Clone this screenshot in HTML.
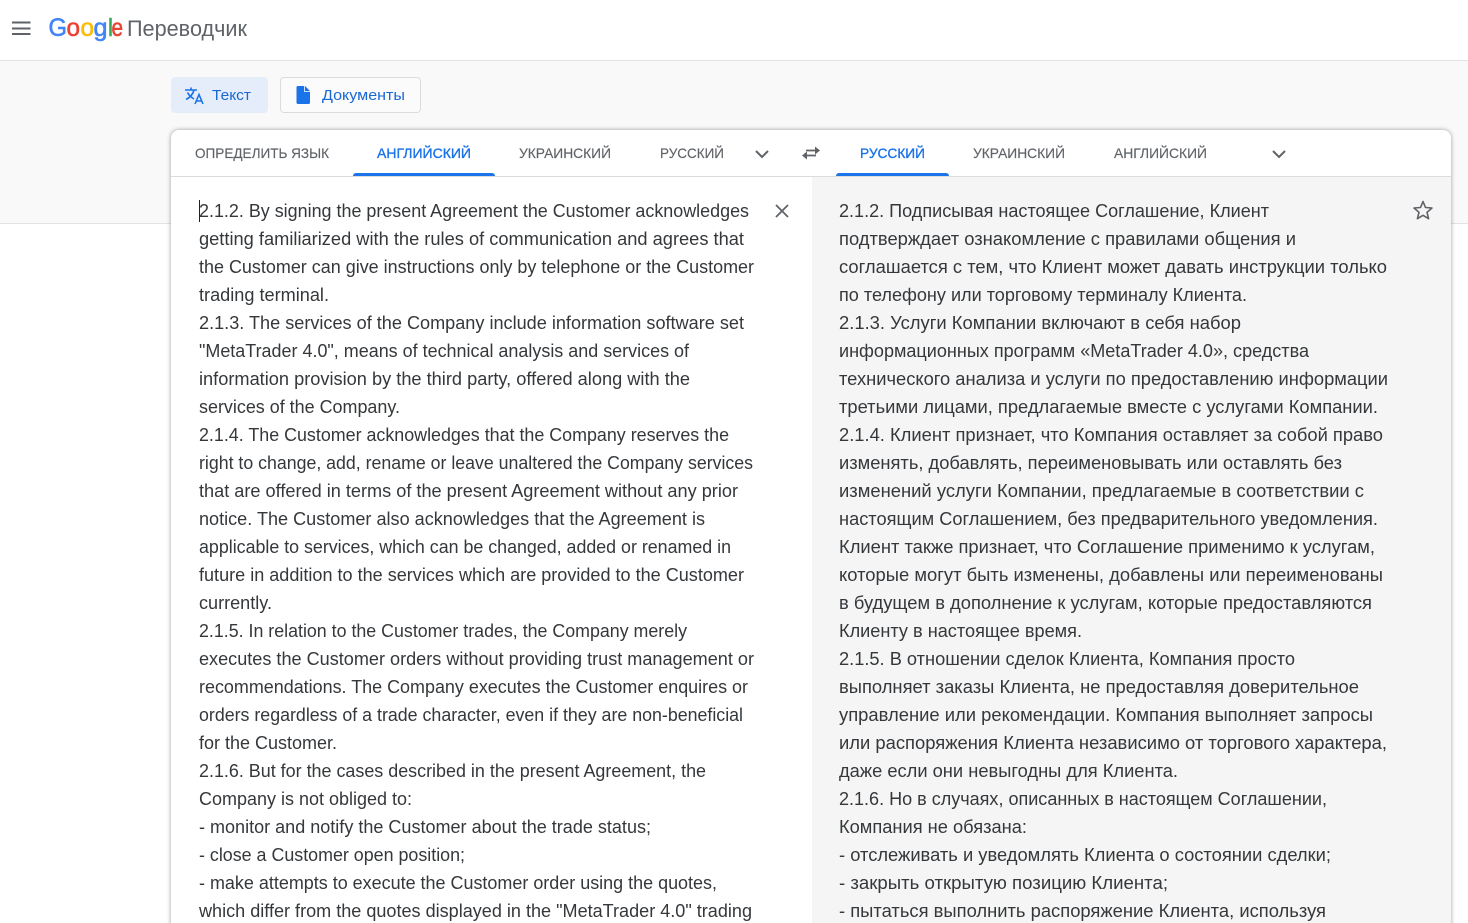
<!DOCTYPE html>
<html lang="ru"><head><meta charset="utf-8"><title>Google Переводчик</title>
<style>
html,body{margin:0;padding:0;width:1468px;height:923px;overflow:hidden;background:#fff}
body{position:relative;font-family:"Liberation Sans",sans-serif}
.a{position:absolute;box-sizing:border-box}
svg{position:absolute;left:0;top:0}
.l text{font-size:18px;fill:#35383b}
.t text{font-size:14px;fill:#5f6368;stroke:#5f6368;stroke-width:.15}
.t text.b{fill:#1a73e8;stroke:#1a73e8;stroke-width:.35}
</style></head><body>
<div class="a" style="left:0;top:0;width:1468px;height:61px;background:#fff;border-bottom:1px solid #e3e3e3"></div>
<div class="a" style="left:0;top:61px;width:1468px;height:163px;background:#f9f9fa;border-bottom:1px solid #e3e3e3"></div>
<div class="a" style="left:171px;top:77px;width:97px;height:36px;background:#e4edf9;border-radius:4px"></div>
<div class="a" style="left:280px;top:77px;width:141px;height:36px;background:#fbfbfb;border:1px solid #dadce0;border-radius:4px"></div>
<div class="a" style="left:171px;top:130px;width:1280px;height:830px;background:#fff;border-radius:8px;box-shadow:0 0 4px rgba(60,64,67,.5)"></div>
<div class="a" style="left:171px;top:176px;width:1280px;height:1px;background:#dadce0"></div>
<div class="a" style="left:812px;top:177px;width:639px;height:746px;background:#f5f5f5"></div>
<div class="a" style="left:353px;top:173px;width:142px;height:3px;background:#1a73e8;border-radius:3px 3px 0 0"></div>
<div class="a" style="left:836px;top:173px;width:113px;height:3px;background:#1a73e8;border-radius:3px 3px 0 0"></div>
<div class="a" style="left:199px;top:200px;width:1px;height:22px;background:#202124"></div>
<svg width="1468" height="923" viewBox="0 0 1468 923" xmlns="http://www.w3.org/2000/svg">
<path d="M12 22.500h18.500M12 28.500h18.500M12 34h18.500" stroke="#5f6368" stroke-width="2" fill="none"/>
<g font-size="25" font-family="Liberation Sans, sans-serif" stroke-width=".6">
<text x="48.500" y="36" fill="#4285f4" stroke="#4285f4" textLength="18.500" lengthAdjust="spacingAndGlyphs">G</text>
<text x="66.500" y="36" fill="#ea4335" stroke="#ea4335" textLength="13.500" lengthAdjust="spacingAndGlyphs">o</text>
<text x="80.500" y="36" fill="#fbbc05" stroke="#fbbc05" textLength="13.500" lengthAdjust="spacingAndGlyphs">o</text>
<text x="93.500" y="36" fill="#4285f4" stroke="#4285f4" textLength="14" lengthAdjust="spacingAndGlyphs">g</text>
<text x="108" y="36" fill="#34a853" stroke="#34a853" textLength="5" lengthAdjust="spacingAndGlyphs">l</text>
<text x="111.500" y="36" fill="#ea4335" stroke="#ea4335" textLength="11.500" lengthAdjust="spacingAndGlyphs">e</text>
</g>
<text x="127" y="36" font-size="22" fill="#5f6368" textLength="120" lengthAdjust="spacingAndGlyphs">Переводчик</text>

<g fill="none" stroke="#1a73e8" stroke-width="1.600">
<path d="M185 90h12M191 87.500v2.500M194 90c-1 4-4 7.500-8 9.500M187.500 92.500c1.500 3 4 5 6.500 6.500"/>
<path d="M195 104l4-9.500 4 9.500M196.500 101h5"/>
</g>
<path d="M298 86h7l5 5v11.500a1.500 1.500 0 0 1-1.500 1.500h-10.500a1.500 1.500 0 0 1-1.500-1.500v-15a1.500 1.500 0 0 1 1.500-1.500z" fill="#1a73e8"/>
<path d="M304.500 86v5.500h5.500" fill="none" stroke="#fff" stroke-width=".8"/>
<text x="212" y="100" font-size="15" fill="#1a67d2" textLength="39" lengthAdjust="spacingAndGlyphs">Текст</text>
<text x="322" y="100" font-size="15" fill="#1a67d2" textLength="83" lengthAdjust="spacingAndGlyphs">Документы</text>

<g class="t">
<text x="195" y="158" textLength="134" lengthAdjust="spacingAndGlyphs">ОПРЕДЕЛИТЬ ЯЗЫК</text>
<text class="b" x="377" y="158" textLength="94" lengthAdjust="spacingAndGlyphs">АНГЛИЙСКИЙ</text>
<text x="519" y="158" textLength="92" lengthAdjust="spacingAndGlyphs">УКРАИНСКИЙ</text>
<text x="660" y="158" textLength="64" lengthAdjust="spacingAndGlyphs">РУССКИЙ</text>
<text class="b" x="860" y="158" textLength="65" lengthAdjust="spacingAndGlyphs">РУССКИЙ</text>
<text x="973" y="158" textLength="92" lengthAdjust="spacingAndGlyphs">УКРАИНСКИЙ</text>
<text x="1114" y="158" textLength="93" lengthAdjust="spacingAndGlyphs">АНГЛИЙСКИЙ</text>
</g>
<g fill="none" stroke="#5f6368" stroke-width="2">
<path d="M756 151l6 6 6-6M1273 151l6 6 6-6"/>
<path d="M807 155.500h9M806 150.500h9" stroke-width="1.700"/>
<path d="M776 205l12 12M788 205l-12 12" stroke-width="1.800"/>
<path d="M1423 201.500l2.500 6 6.500 .5-5 4.300 1.600 6.400-5.600-3.400-5.600 3.400 1.600-6.400-5-4.300 6.500-.5z" stroke-width="1.600" stroke-linejoin="round"/>
</g>
<path d="M802 155.500l5-4v8zM820 150.500l-5-4v8z" fill="#5f6368"/>

<g class="l">
<text x="199" y="217" textLength="550" lengthAdjust="spacingAndGlyphs">2.1.2. By signing the present Agreement the Customer acknowledges</text>
<text x="199" y="245" textLength="545" lengthAdjust="spacingAndGlyphs">getting familiarized with the rules of communication and agrees that</text>
<text x="199" y="273" textLength="555" lengthAdjust="spacingAndGlyphs">the Customer can give instructions only by telephone or the Customer</text>
<text x="199" y="301" textLength="130" lengthAdjust="spacingAndGlyphs">trading terminal.</text>
<text x="199" y="329" textLength="545" lengthAdjust="spacingAndGlyphs">2.1.3. The services of the Company include information software set</text>
<text x="199" y="357" textLength="490" lengthAdjust="spacingAndGlyphs">"MetaTrader 4.0", means of technical analysis and services of</text>
<text x="199" y="385" textLength="491" lengthAdjust="spacingAndGlyphs">information provision by the third party, offered along with the</text>
<text x="199" y="413" textLength="201" lengthAdjust="spacingAndGlyphs">services of the Company.</text>
<text x="199" y="441" textLength="530" lengthAdjust="spacingAndGlyphs">2.1.4. The Customer acknowledges that the Company reserves the</text>
<text x="199" y="469" textLength="554" lengthAdjust="spacingAndGlyphs">right to change, add, rename or leave unaltered the Company services</text>
<text x="199" y="497" textLength="539" lengthAdjust="spacingAndGlyphs">that are offered in terms of the present Agreement without any prior</text>
<text x="199" y="525" textLength="506" lengthAdjust="spacingAndGlyphs">notice. The Customer also acknowledges that the Agreement is</text>
<text x="199" y="553" textLength="532" lengthAdjust="spacingAndGlyphs">applicable to services, which can be changed, added or renamed in</text>
<text x="199" y="581" textLength="545" lengthAdjust="spacingAndGlyphs">future in addition to the services which are provided to the Customer</text>
<text x="199" y="609" textLength="73" lengthAdjust="spacingAndGlyphs">currently.</text>
<text x="199" y="637" textLength="488" lengthAdjust="spacingAndGlyphs">2.1.5. In relation to the Customer trades, the Company merely</text>
<text x="199" y="665" textLength="555" lengthAdjust="spacingAndGlyphs">executes the Customer orders without providing trust management or</text>
<text x="199" y="693" textLength="549" lengthAdjust="spacingAndGlyphs">recommendations. The Company executes the Customer enquires or</text>
<text x="199" y="721" textLength="544" lengthAdjust="spacingAndGlyphs">orders regardless of a trade character, even if they are non-beneficial</text>
<text x="199" y="749" textLength="138" lengthAdjust="spacingAndGlyphs">for the Customer.</text>
<text x="199" y="777" textLength="507" lengthAdjust="spacingAndGlyphs">2.1.6. But for the cases described in the present Agreement, the</text>
<text x="199" y="805" textLength="213" lengthAdjust="spacingAndGlyphs">Company is not obliged to:</text>
<text x="199" y="833" textLength="452" lengthAdjust="spacingAndGlyphs">- monitor and notify the Customer about the trade status;</text>
<text x="199" y="861" textLength="266" lengthAdjust="spacingAndGlyphs">- close a Customer open position;</text>
<text x="199" y="889" textLength="518" lengthAdjust="spacingAndGlyphs">- make attempts to execute the Customer order using the quotes,</text>
<text x="199" y="917" textLength="553" lengthAdjust="spacingAndGlyphs">which differ from the quotes displayed in the "MetaTrader 4.0" trading</text>

<text x="839" y="217" textLength="430" lengthAdjust="spacingAndGlyphs">2.1.2. Подписывая настоящее Соглашение, Клиент</text>
<text x="839" y="245" textLength="457" lengthAdjust="spacingAndGlyphs">подтверждает ознакомление с правилами общения и</text>
<text x="839" y="273" textLength="548" lengthAdjust="spacingAndGlyphs">соглашается с тем, что Клиент может давать инструкции только</text>
<text x="839" y="301" textLength="408" lengthAdjust="spacingAndGlyphs">по телефону или торговому терминалу Клиента.</text>
<text x="839" y="329" textLength="402" lengthAdjust="spacingAndGlyphs">2.1.3. Услуги Компании включают в себя набор</text>
<text x="839" y="357" textLength="470" lengthAdjust="spacingAndGlyphs">информационных программ «MetaTrader 4.0», средства</text>
<text x="839" y="385" textLength="549" lengthAdjust="spacingAndGlyphs">технического анализа и услуги по предоставлению информации</text>
<text x="839" y="413" textLength="539" lengthAdjust="spacingAndGlyphs">третьими лицами, предлагаемые вместе с услугами Компании.</text>
<text x="839" y="441" textLength="544" lengthAdjust="spacingAndGlyphs">2.1.4. Клиент признает, что Компания оставляет за собой право</text>
<text x="839" y="469" textLength="503" lengthAdjust="spacingAndGlyphs">изменять, добавлять, переименовывать или оставлять без</text>
<text x="839" y="497" textLength="525" lengthAdjust="spacingAndGlyphs">изменений услуги Компании, предлагаемые в соответствии с</text>
<text x="839" y="525" textLength="539" lengthAdjust="spacingAndGlyphs">настоящим Соглашением, без предварительного уведомления.</text>
<text x="839" y="553" textLength="536" lengthAdjust="spacingAndGlyphs">Клиент также признает, что Соглашение применимо к услугам,</text>
<text x="839" y="581" textLength="544" lengthAdjust="spacingAndGlyphs">которые могут быть изменены, добавлены или переименованы</text>
<text x="839" y="609" textLength="533" lengthAdjust="spacingAndGlyphs">в будущем в дополнение к услугам, которые предоставляются</text>
<text x="839" y="637" textLength="243" lengthAdjust="spacingAndGlyphs">Клиенту в настоящее время.</text>
<text x="839" y="665" textLength="456" lengthAdjust="spacingAndGlyphs">2.1.5. В отношении сделок Клиента, Компания просто</text>
<text x="839" y="693" textLength="520" lengthAdjust="spacingAndGlyphs">выполняет заказы Клиента, не предоставляя доверительное</text>
<text x="839" y="721" textLength="534" lengthAdjust="spacingAndGlyphs">управление или рекомендации. Компания выполняет запросы</text>
<text x="839" y="749" textLength="548" lengthAdjust="spacingAndGlyphs">или распоряжения Клиента независимо от торгового характера,</text>
<text x="839" y="777" textLength="339" lengthAdjust="spacingAndGlyphs">даже если они невыгодны для Клиента.</text>
<text x="839" y="805" textLength="488" lengthAdjust="spacingAndGlyphs">2.1.6. Но в случаях, описанных в настоящем Соглашении,</text>
<text x="839" y="833" textLength="188" lengthAdjust="spacingAndGlyphs">Компания не обязана:</text>
<text x="839" y="861" textLength="492" lengthAdjust="spacingAndGlyphs">- отслеживать и уведомлять Клиента о состоянии сделки;</text>
<text x="839" y="889" textLength="329" lengthAdjust="spacingAndGlyphs">- закрыть открытую позицию Клиента;</text>
<text x="839" y="917" textLength="487" lengthAdjust="spacingAndGlyphs">- пытаться выполнить распоряжение Клиента, используя</text>
</g>
</svg>
</body></html>
